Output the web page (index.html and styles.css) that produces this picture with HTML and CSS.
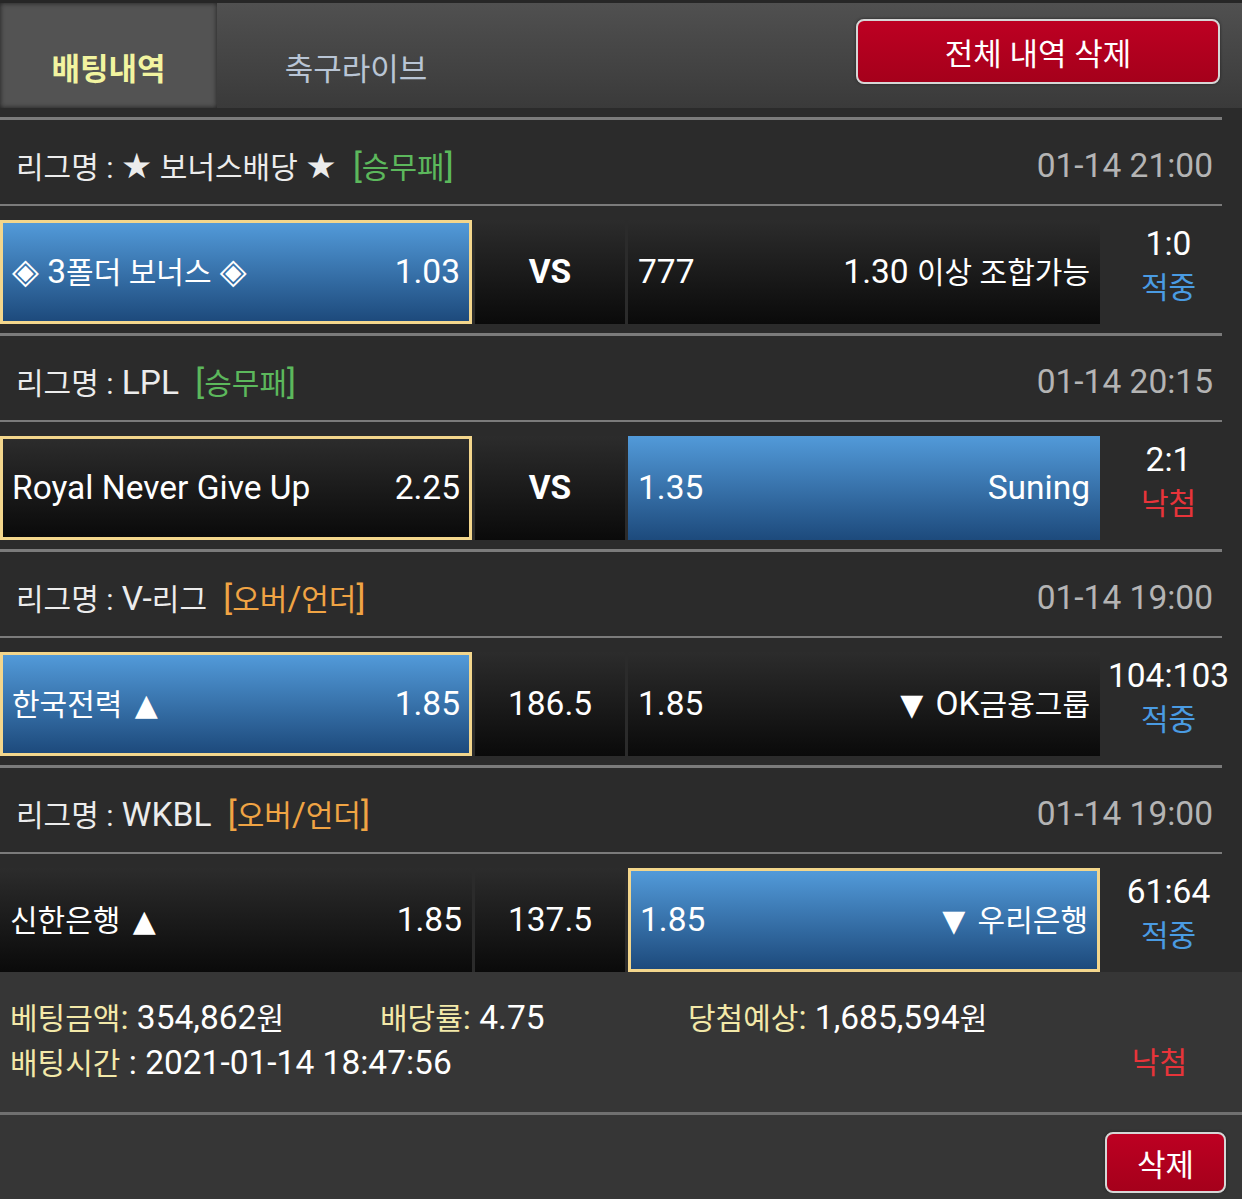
FILE: index.html
```html
<!DOCTYPE html>
<html>
  <head>
    <meta charset="utf-8" />
    <title>배팅내역</title>
    <link rel="stylesheet" href="styles.css">
  </head>
  <body>
    <div id="tabs">
      <a class="tab selected">배팅내역</a>
      <a class="tab">축구라이브</a>
      <button class="btn-red" id="clearAll">전체 내역 삭제</button>
    </div>

    <div id="list">
      <div class="league">
        <span><span class="ko">리그명 : <span class="sym big">★</span> 보너스배당 <span class="sym big">★</span></span> <span class="type green">[<span class="ko">승무패</span>]</span></span>
        <span class="date">01-14 21:00</span>
      </div>
      <div class="bet">
        <div class="cell blue picked"><span><span class="sym big">◈</span> 3<span class="ko">폴더 보너스</span> <span class="sym big">◈</span></span><span>1.03</span></div>
        <div class="cell mid vs">VS</div>
        <div class="cell"><span>777</span><span>1.30 <span class="ko">이상 조합가능</span></span></div>
        <div class="result"><span>1:0</span><span class="ko win">적중</span></div>
      </div>

      <div class="league">
        <span><span class="ko">리그명 :</span> LPL <span class="type green">[<span class="ko">승무패</span>]</span></span>
        <span class="date">01-14 20:15</span>
      </div>
      <div class="bet">
        <div class="cell picked"><span>Royal Never Give Up</span><span>2.25</span></div>
        <div class="cell mid vs">VS</div>
        <div class="cell blue"><span>1.35</span><span>Suning</span></div>
        <div class="result"><span>2:1</span><span class="ko lose">낙첨</span></div>
      </div>

      <div class="league">
        <span><span class="ko">리그명 :</span> V-<span class="ko">리그</span> <span class="type orange">[<span class="ko">오버</span>/<span class="ko">언더</span>]</span></span>
        <span class="date">01-14 19:00</span>
      </div>
      <div class="bet">
        <div class="cell blue picked"><span><span class="ko">한국전력</span> <span class="sym">▲</span></span><span>1.85</span></div>
        <div class="cell mid">186.5</div>
        <div class="cell"><span>1.85</span><span><span class="sym">▼</span> OK<span class="ko">금융그룹</span></span></div>
        <div class="result"><span>104:103</span><span class="ko win">적중</span></div>
      </div>

      <div class="league">
        <span><span class="ko">리그명 :</span> WKBL <span class="type orange">[<span class="ko">오버</span>/<span class="ko">언더</span>]</span></span>
        <span class="date">01-14 19:00</span>
      </div>
      <div class="bet">
        <div class="cell"><span><span class="ko">신한은행</span> <span class="sym">▲</span></span><span>1.85</span></div>
        <div class="cell mid">137.5</div>
        <div class="cell blue picked"><span>1.85</span><span><span class="sym">▼</span> <span class="ko">우리은행</span></span></div>
        <div class="result"><span>61:64</span><span class="ko win">적중</span></div>
      </div>
    </div>

    <div id="summary">
      <div class="line">
        <span class="amount"><span class="label ko">베팅금액</span><span class="label">:</span> 354,862<span class="ko">원</span></span>
        <span class="rate"><span class="label ko">배당률</span><span class="label">:</span> 4.75</span>
        <span><span class="label ko">당첨예상</span><span class="label">:</span> 1,685,594<span class="ko">원</span></span>
      </div>
      <div class="line">
        <span><span class="label ko">배팅시간</span> : 2021-01-14 18:47:56</span>
        <span class="ko lose">낙첨</span>
      </div>
    </div>

    <div id="footer">
      <button class="btn-red small">삭제</button>
    </div>
  </body>
</html>
```

FILE: styles.css
```css
body {
  margin: 0;
  width: 1242px;
  background: #363636;
  color: #fff;
  font-family: Roboto, "Noto Sans CJK KR", sans-serif;
  font-size: 33.5px;
}

.ko {
  font-size: 30px;
}

.sym {
  margin: 0 4px;
  font-family: "DejaVu Sans", sans-serif;
  font-size: 30px;
}

.sym.big {
  margin: 0;
  font-size: 35px;
}

#tabs {
  display: flex;
  height: 105px;
  border-top: 3px solid #262626;
  background: linear-gradient(#505050, #3a3a3a);
}

.tab {
  box-sizing: border-box;
  width: 276px;
  padding-top: 47px;
  line-height: 40px;
  text-align: center;
  font-size: 31px;
  color: #b9c5d5;
}

.tab.selected {
  width: 217px;
  margin-right: 1px;
  background: #535353;
  box-shadow: inset 0 0 5px #1e1e1e;
  color: #f2f4a0;
  font-weight: bold;
}

.btn-red {
  margin: 16px 22px 0 auto;
  width: 364px;
  height: 65px;
  border: 2px solid #d6d6d6;
  border-radius: 8px;
  background: linear-gradient(#bd0022, #a5001b);
  color: #fff;
  font-family: inherit;
  font-size: 31px;
  box-shadow: 0 0 3px #222;
}

#list {
  padding-top: 9px;
  background: #2b2b2b;
}

.league {
  display: flex;
  align-items: center;
  justify-content: space-between;
  box-sizing: border-box;
  height: 89px;
  margin-right: 20px;
  padding: 6px 9px 0 16px;
  border-top: 3px solid #7b7b7b;
  border-bottom: 2px solid #7b7b7b;
  background: #2b2b2b;
  color: #ececec;
}

.type {
  margin-left: 8px;
}

.green {
  color: #5cb85c;
}

.orange {
  color: #f0a444;
}

.date {
  color: #b4b4b4;
}

.bet {
  display: grid;
  grid-template-columns: 472px 150px 472px 1fr;
  grid-template-rows: 104px;
  column-gap: 3px;
  padding: 14px 0 9px;
}

.bet:last-child {
  padding-bottom: 0;
}

.cell {
  display: flex;
  align-items: center;
  justify-content: space-between;
  box-sizing: border-box;
  height: 104px;
  padding: 0 10px;
  line-height: 40px;
  background: linear-gradient(#2c2c2c, #0a0a0a);
}

.cell.blue {
  background: linear-gradient(#529ad9, #1d4a7c);
}

.cell.picked {
  border: 3px solid #f3d68c;
  padding: 0 9px;
}

.cell.mid {
  justify-content: center;
}

.vs {
  font-weight: bold;
}

.result {
  display: flex;
  flex-direction: column;
  align-items: center;
  justify-content: center;
  box-sizing: border-box;
  height: 104px;
  padding: 0 8px 12px 0;
  line-height: 44px;
}

.win {
  color: #4a9be2;
}

.lose {
  color: #e8343a;
}

#summary {
  box-sizing: border-box;
  height: 140px;
  padding: 24px 55px 0 10px;
  line-height: 44px;
}

.line {
  display: flex;
  justify-content: space-between;
}

.line:first-child {
  justify-content: flex-start;
}

.amount {
  width: 370px;
}

.rate {
  width: 308px;
}

.label {
  color: #f3e9a9;
}

#footer {
  display: flex;
  border-top: 3px solid #707070;
  padding: 17px 16px 0;
}

.btn-red.small {
  margin: 0 0 0 auto;
  width: 121px;
  height: 61px;
}
```
